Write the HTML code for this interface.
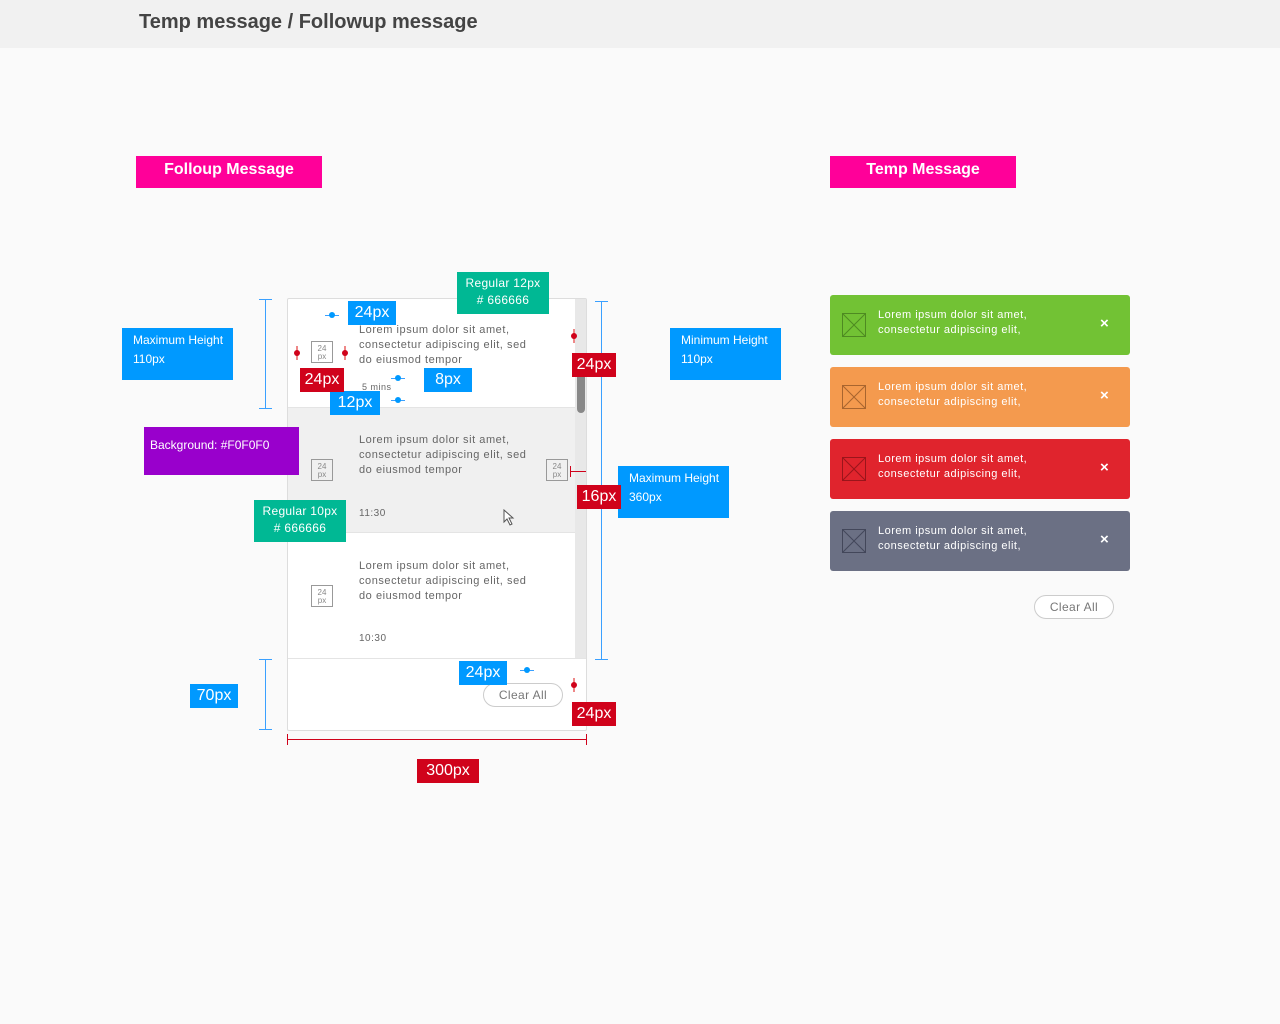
<!DOCTYPE html>
<html><head><meta charset="utf-8"><style>
*{margin:0;padding:0;box-sizing:border-box}
body{width:1280px;height:1024px;background:#fafafa;font-family:"Liberation Sans",sans-serif;position:relative;overflow:hidden}
.a{position:absolute}
.hdr{left:0;top:0;width:1280px;height:48px;background:#f1f1f1}
.t{color:#666;font-size:11px;line-height:15px;letter-spacing:.55px;white-space:nowrap}
.ph{width:22px;height:22px;border:1px solid #999;font-size:8px;line-height:8px;color:#888;text-align:center;padding-top:3px;background:#fff}
.bl{background:#0099ff;color:#fff}
.rd{background:#d0021b;color:#fff}
.gr{background:#00b894;color:#fff}
.lbl{font-size:12px;line-height:19px;padding:3px 11px;white-space:nowrap}
.big{font-size:16px;line-height:24px;text-align:center}
.toast{left:830px;width:300px;height:60px;border-radius:3px;color:#fff;font-size:11px;line-height:15px;letter-spacing:.5px}
.toast .ic{position:absolute;left:12px;top:18px;width:24px;height:24px}
.toast .tx{position:absolute;left:48px;top:13px;white-space:nowrap}
.toast .x{position:absolute;left:270px;top:21px;font-size:15px;font-weight:bold}
.ln{background:#3aa0ff}
.dot{width:6px;height:6px;border-radius:3px}
</style></head><body>
<div class="a hdr"></div>
<div class="a" style="left:139px;top:11px;font-size:20px;font-weight:bold;color:#444">Temp message / Followup message</div>
<div class="a" style="left:136px;top:156px;width:186px;height:32px;background:#ff0099;color:#fff;font-weight:bold;font-size:16px;line-height:28px;text-align:center">Folloup Message</div>
<div class="a" style="left:830px;top:156px;width:186px;height:32px;background:#ff0099;color:#fff;font-weight:bold;font-size:16px;line-height:28px;text-align:center">Temp Message</div>

<div class="a" style="left:287px;top:298px;width:300px;height:433px;background:#fff;border:1px solid #ddd;border-radius:2px"></div>
<div class="a" style="left:288px;top:407px;width:287px;height:126px;background:#f0f0f0;border-top:1px solid #e4e4e4;border-bottom:1px solid #e4e4e4"></div>
<div class="a" style="left:288px;top:658px;width:298px;height:1px;background:#e4e4e4"></div>
<div class="a" style="left:575px;top:299px;width:11px;height:359px;background:#e8e8e8"></div>
<div class="a" style="left:577px;top:355px;width:8px;height:58px;background:#888;border-radius:4px"></div>

<div class="a ph" style="left:311px;top:341px">24<br>px</div>
<div class="a t" style="left:359px;top:323px">Lorem ipsum dolor sit amet,<br>consectetur adipiscing elit, sed<br>do eiusmod tempor</div>
<div class="a" style="left:362px;top:382px;font-size:9px;color:#666;letter-spacing:.5px">5 mins</div>

<div class="a ph" style="left:311px;top:459px;background:#f0f0f0">24<br>px</div>
<div class="a ph" style="left:546px;top:459px;background:#f0f0f0">24<br>px</div>
<div class="a t" style="left:359px;top:433px">Lorem ipsum dolor sit amet,<br>consectetur adipiscing elit, sed<br>do eiusmod tempor</div>
<div class="a" style="left:359px;top:508px;font-size:10px;color:#666;letter-spacing:.5px">11:30</div>

<div class="a ph" style="left:311px;top:585px">24<br>px</div>
<div class="a t" style="left:359px;top:559px">Lorem ipsum dolor sit amet,<br>consectetur adipiscing elit, sed<br>do eiusmod tempor</div>
<div class="a" style="left:359px;top:633px;font-size:10px;color:#666;letter-spacing:.5px">10:30</div>

<div class="a" style="left:483px;top:683px;width:80px;height:24px;border:1px solid #ccc;border-radius:12px;font-size:12px;color:#777;text-align:center;line-height:22px;background:#fff;letter-spacing:.4px">Clear All</div>
<svg class="a" style="left:503px;top:509px" width="14" height="18"><path d="M1 1 L1 13 L4 10 L7 16 L9 15 L6 9 L10 9 Z" fill="#fff" stroke="#555"/></svg>

<div class="a ln" style="left:265px;top:299px;width:1px;height:110px"></div>
<div class="a ln" style="left:259px;top:299px;width:13px;height:1px"></div>
<div class="a ln" style="left:259px;top:408px;width:13px;height:1px"></div>
<div class="a ln" style="left:265px;top:659px;width:1px;height:71px"></div>
<div class="a ln" style="left:259px;top:659px;width:13px;height:1px"></div>
<div class="a ln" style="left:259px;top:729px;width:13px;height:1px"></div>
<div class="a ln" style="left:601px;top:301px;width:1px;height:359px"></div>
<div class="a ln" style="left:595px;top:301px;width:13px;height:1px"></div>
<div class="a ln" style="left:595px;top:659px;width:13px;height:1px"></div>
<div class="a" style="left:287px;top:739px;width:300px;height:1px;background:#d0021b"></div>
<div class="a" style="left:287px;top:734px;width:1px;height:11px;background:#d0021b"></div>
<div class="a" style="left:586px;top:734px;width:1px;height:11px;background:#d0021b"></div>
<div class="a" style="left:570px;top:471px;width:16px;height:1px;background:#d0021b"></div>
<div class="a" style="left:570px;top:466px;width:1px;height:11px;background:#d0021b"></div>

<div class="a ln" style="left:325px;top:315px;width:14px;height:1px"></div>
<div class="a bl dot" style="left:329px;top:312px"></div>
<div class="a ln" style="left:391px;top:378px;width:14px;height:1px"></div>
<div class="a bl dot" style="left:395px;top:375px"></div>
<div class="a ln" style="left:391px;top:400px;width:14px;height:1px"></div>
<div class="a bl dot" style="left:395px;top:397px"></div>
<div class="a ln" style="left:520px;top:670px;width:14px;height:1px"></div>
<div class="a bl dot" style="left:524px;top:667px"></div>

<div class="a" style="left:296px;top:346px;width:2px;height:14px;background:#e88"></div>
<div class="a rd dot" style="left:294px;top:350px"></div>
<div class="a" style="left:344px;top:346px;width:2px;height:14px;background:#e88"></div>
<div class="a rd dot" style="left:342px;top:350px"></div>
<div class="a" style="left:573px;top:329px;width:2px;height:14px;background:#e88"></div>
<div class="a rd dot" style="left:571px;top:333px"></div>
<div class="a" style="left:573px;top:678px;width:2px;height:14px;background:#e88"></div>
<div class="a rd dot" style="left:571px;top:682px"></div>

<div class="a bl lbl" style="left:122px;top:328px;width:111px;height:52px">Maximum Height<br>110px</div>
<div class="a bl lbl" style="left:670px;top:328px;width:111px;height:52px">Minimum Height<br>110px</div>
<div class="a bl lbl" style="left:618px;top:466px;width:111px;height:52px">Maximum Height<br>360px</div>
<div class="a lbl" style="left:144px;top:427px;width:155px;height:48px;background:#9900cc;color:#fff;padding:9px 6px">Background: #F0F0F0</div>
<div class="a gr lbl" style="left:457px;top:272px;width:92px;height:42px;text-align:center;padding:3px 0;line-height:17px;letter-spacing:.3px">Regular 12px<br># 666666</div>
<div class="a gr lbl" style="left:254px;top:500px;width:92px;height:42px;text-align:center;padding:3px 0;line-height:17px;letter-spacing:.3px">Regular 10px<br># 666666</div>
<div class="a bl big" style="left:348px;top:301px;width:48px">24px</div>
<div class="a bl big" style="left:424px;top:368px;width:48px">8px</div>
<div class="a bl big" style="left:330px;top:391px;width:50px">12px</div>
<div class="a bl big" style="left:459px;top:661px;width:48px">24px</div>
<div class="a bl big" style="left:190px;top:684px;width:48px">70px</div>
<div class="a rd big" style="left:300px;top:368px;width:44px">24px</div>
<div class="a rd big" style="left:572px;top:353px;width:44px">24px</div>
<div class="a rd big" style="left:577px;top:485px;width:44px">16px</div>
<div class="a rd big" style="left:572px;top:702px;width:44px">24px</div>
<div class="a rd big" style="left:417px;top:759px;width:62px">300px</div>

<div class="a toast" style="top:295px;background:#72c234"><svg class="ic" viewBox="0 0 24 24"><rect x=".5" y=".5" width="23" height="23" fill="none" stroke="#4e8a22"/><path d="M0 0L24 24M24 0L0 24" stroke="#4e8a22"/></svg><div class="tx">Lorem ipsum dolor sit amet,<br>consectetur adipiscing elit,</div><div class="x">×</div></div>
<div class="a toast" style="top:367px;background:#f49a4e"><svg class="ic" viewBox="0 0 24 24"><rect x=".5" y=".5" width="23" height="23" fill="none" stroke="#a8652f"/><path d="M0 0L24 24M24 0L0 24" stroke="#a8652f"/></svg><div class="tx">Lorem ipsum dolor sit amet,<br>consectetur adipiscing elit,</div><div class="x">×</div></div>
<div class="a toast" style="top:439px;background:#e0242d"><svg class="ic" viewBox="0 0 24 24"><rect x=".5" y=".5" width="23" height="23" fill="none" stroke="#9a151b"/><path d="M0 0L24 24M24 0L0 24" stroke="#9a151b"/></svg><div class="tx">Lorem ipsum dolor sit amet,<br>consectetur adipiscing elit,</div><div class="x">×</div></div>
<div class="a toast" style="top:511px;background:#6b7084"><svg class="ic" viewBox="0 0 24 24"><rect x=".5" y=".5" width="23" height="23" fill="none" stroke="#43475a"/><path d="M0 0L24 24M24 0L0 24" stroke="#43475a"/></svg><div class="tx">Lorem ipsum dolor sit amet,<br>consectetur adipiscing elit,</div><div class="x">×</div></div>
<div class="a" style="left:1034px;top:595px;width:80px;height:24px;border:1px solid #ccc;border-radius:12px;font-size:12px;color:#777;text-align:center;line-height:22px;background:#fff;letter-spacing:.4px">Clear All</div>
</body></html>
